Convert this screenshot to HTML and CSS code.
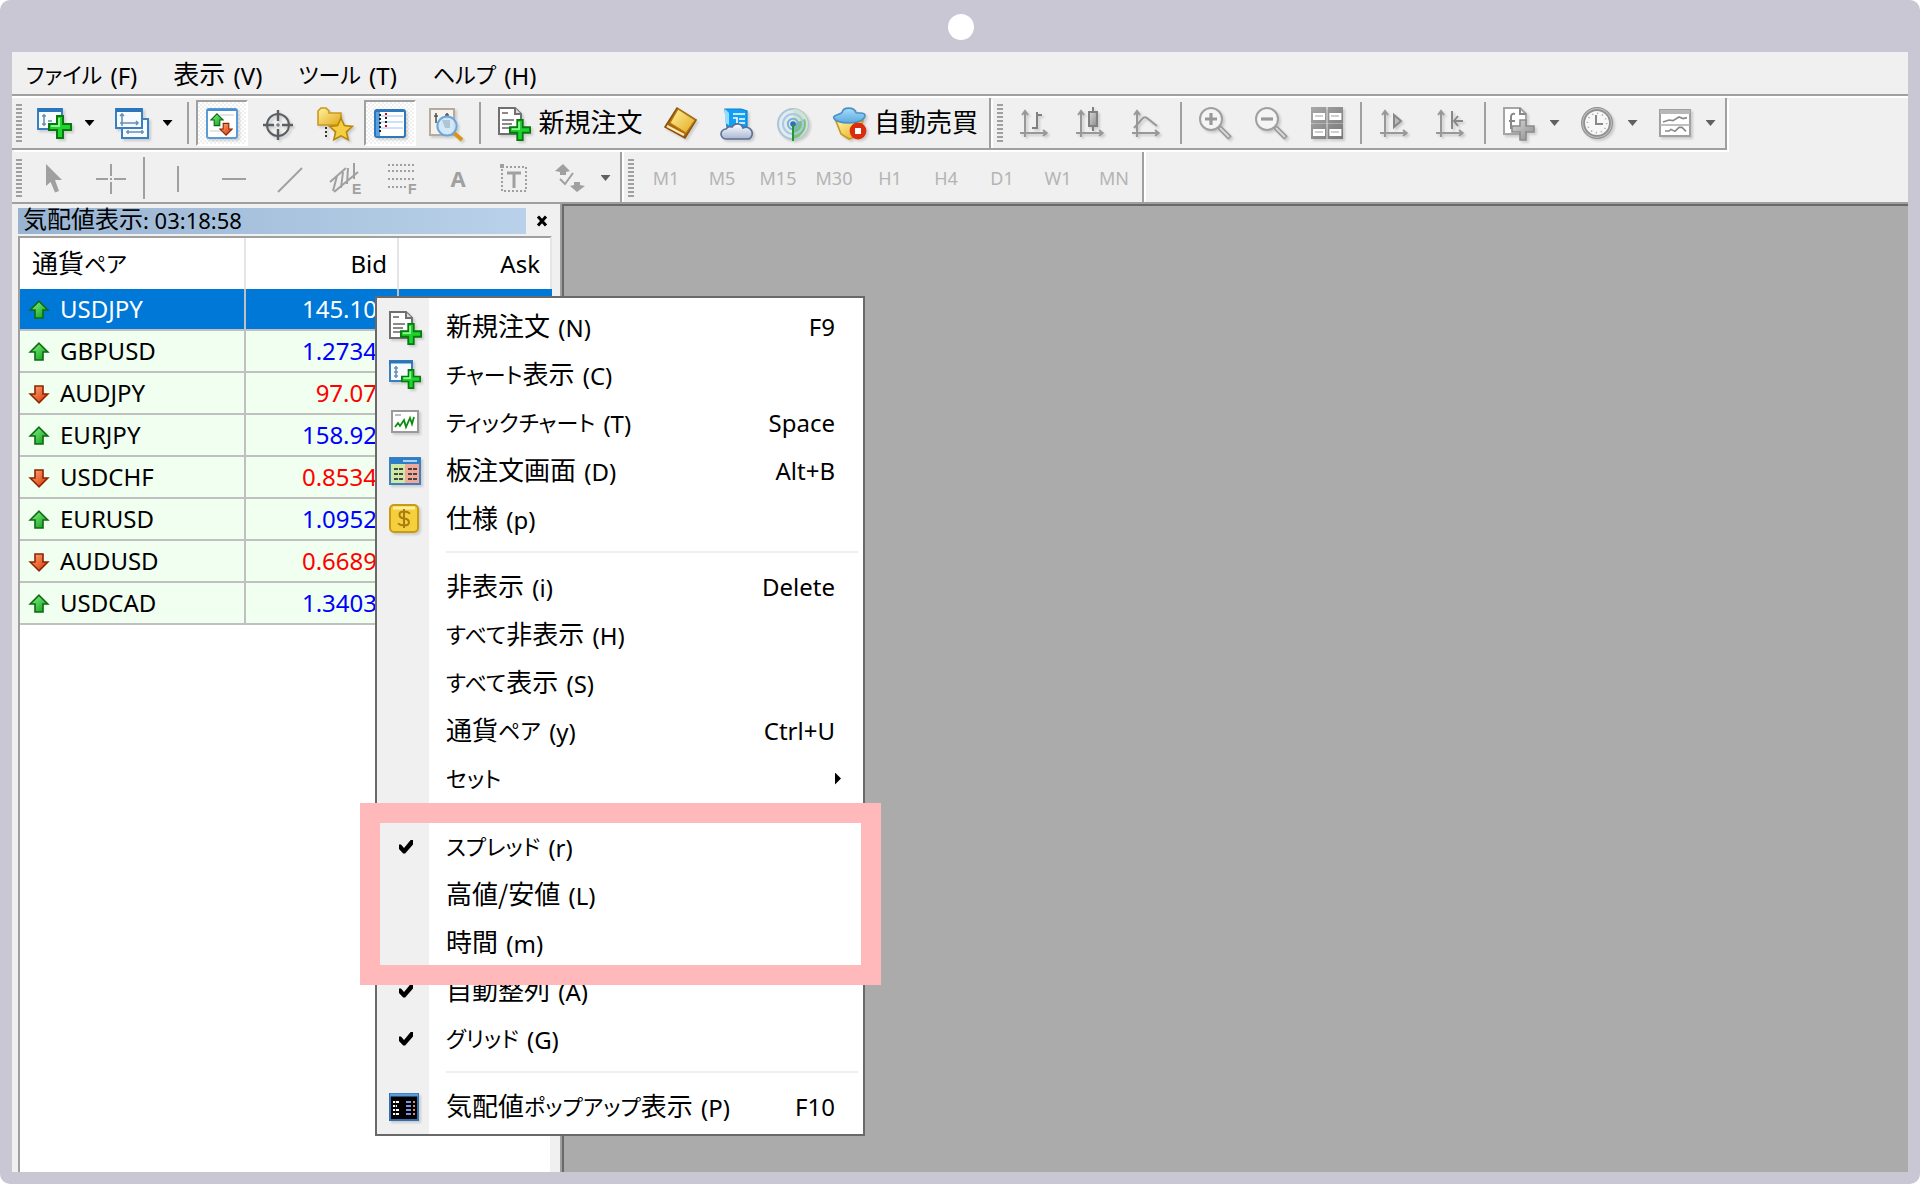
FILE: index.html
```html
<!DOCTYPE html>
<html lang="ja">
<head>
<meta charset="utf-8">
<meta name="viewport" content="width=device-width, initial-scale=1">
<title>気配値表示</title>
<link rel="stylesheet" href="styles.css">
</head>
<body>
<svg class="defs" aria-hidden="true">
  <defs>
    <linearGradient id="gGold" x1="0" y1="0" x2="1" y2="1"><stop offset="0" stop-color="#fff3a0"/><stop offset="1" stop-color="#e2a81c"/></linearGradient>
    <linearGradient id="gGreen" x1="0" y1="0" x2="1" y2="1"><stop offset="0" stop-color="#8cf58c"/><stop offset="1" stop-color="#0a9a14"/></linearGradient>
    <linearGradient id="gRed" x1="0" y1="0" x2="1" y2="1"><stop offset="0" stop-color="#ffab7a"/><stop offset="1" stop-color="#d83200"/></linearGradient>
    <linearGradient id="gSky" x1="0" y1="0" x2="0" y2="1"><stop offset="0" stop-color="#a8dcfa"/><stop offset="1" stop-color="#5aa9e0"/></linearGradient>
    <linearGradient id="gCloud" x1="0" y1="0" x2="0" y2="1"><stop offset="0" stop-color="#ffffff"/><stop offset="1" stop-color="#a9b7d2"/></linearGradient>
    <linearGradient id="gGrey" x1="0" y1="0" x2="1" y2="1"><stop offset="0" stop-color="#d8d8d8"/><stop offset="1" stop-color="#8c8c8c"/></linearGradient>
    <linearGradient id="gTile" x1="0" y1="0" x2="1" y2="1"><stop offset="0" stop-color="#a8a8a8"/><stop offset="1" stop-color="#787878"/></linearGradient>
    <symbol id="plus" viewBox="0 0 12 12"><path d="M4.500.500h3v4h4v3h-4v4h-3v-4h-4v-3h4z" fill="#1fd42e" stroke="#067a0c"/><path d="M5.500 1.500v4h-4" fill="none" stroke="#8df592"/></symbol>
    <symbol id="up" viewBox="0 0 10 10"><path d="M5 .6 9.400 5H7v4H3V5H.6z" fill="url(#gGreen)" stroke="#0b6b10" stroke-width=".8"/></symbol>
    <symbol id="down" viewBox="0 0 10 10"><path d="M5 9.400.6 5H3V1h4v4h2.400z" fill="url(#gRed)" stroke="#8c2500" stroke-width=".8"/></symbol>
    <symbol id="page-plus" viewBox="0 0 18 18"><path d="M1.500 1.500h8l3 3v10h-11z" fill="#fff" stroke="#707070"/><path d="M9.500 1.500v3h3" fill="#ddd" stroke="#707070"/><path d="M3 4h3M3 7.500h6M3 9.500h5M3 11.500h4" stroke="#8a8a8a"/><use href="#plus" x="6.500" y="7" width="11" height="11"/></symbol>
    <symbol id="chart-plus" viewBox="0 0 18 18"><rect x="1" y="2" width="12" height="10" fill="#f6fbff" stroke="#3a7fbf"/><path d="M1 2.500h12" stroke="#2b76bb" stroke-width="2"/><path d="M4 4.500v6M3 5.500h2M3 9.500h2M6 8h2" stroke="#6d8fb0" stroke-width=".8"/><use href="#plus" x="6" y="5" width="12" height="12"/></symbol>
    <symbol id="chart-plus-small" viewBox="0 0 18 18"><rect x="1.500" y="2" width="11" height="10" fill="#f6fbff" stroke="#3a7fbf"/><path d="M1 2.500h12" stroke="#2b76bb" stroke-width="1.500"/><path d="M4.500 4.500v6M3.500 5.500h2M3.500 7.500h2M3.500 9.500h2" stroke="#6d8fb0" stroke-width=".8"/><use href="#plus" x="7" y="6" width="10" height="10"/></symbol>
    <symbol id="axes" viewBox="0 0 18 18"><path d="M4 3v13M1.500 14h13M2.500 5 4 3l1.500 2M13 12.500l1.800 1.500L13 15.500" fill="none" stroke="#989898"/></symbol>
  </defs>
</svg>

<div class="frame">
  <span class="camera"></span>
  <main class="app">
    <nav class="menubar">
      <button><span class="kana">ファイル</span> (F)</button>
      <button><span class="kanji">表示</span> (V)</button>
      <button><span class="kana">ツール</span> (T)</button>
      <button><span class="kana">ヘルプ</span> (H)</button>
    </nav>

    <div class="bar-row">
      <div class="toolbar">
        <button class="tool drop" aria-label="新規チャート"><svg class="icon" viewBox="0 0 18 18"><use href="#chart-plus"/></svg><i class="caret"></i></button>
        <button class="tool drop" aria-label="プロファイル"><svg class="icon" viewBox="0 0 18 18"><g fill="#f6fbff" stroke="#3a7fbf"><rect x="4" y="7" width="13" height="9.500"/><rect x="1" y="2" width="13" height="9.500"/></g><path d="M1 2.500h13" stroke="#2b76bb" stroke-width="2"/><path d="M4 4.500v6M3 5.500l1-1 1 1M3 9h9M11 8l1 1-1 1M6 13.500h9M7 12.500v2M14 12.500v2" fill="none" stroke="#6d8fb0" stroke-width=".8"/></svg><i class="caret"></i></button>
        <i class="sep"></i>
        <button class="tool pressed" aria-label="気配値表示"><svg class="icon" viewBox="0 0 18 18"><rect x="1.500" y="2" width="15" height="14.500" rx="1" fill="#fff" stroke="#5b9bd8"/><path d="M1.500 2.500h15" stroke="#4a90d4"/><path d="M8 5h7M3 13h7" stroke="#e4e4e4"/><use href="#up" x="3" y="4" width="7" height="7"/><use href="#down" x="7.500" y="8.500" width="7" height="7"/></svg></button>
        <button class="tool" aria-label="データウィンドウ"><svg class="icon" viewBox="0 0 18 18"><g fill="none" stroke="#5a5f63"><circle cx="9" cy="10" r="5.500"/><path d="M9 2.500v5.500M9 12v5.500M1.500 10H7M11 10h5.500" stroke-width="1.200"/></g><path d="M8 10h2M9 9v2" stroke="#5a5f63" stroke-width=".5"/></svg></button>
        <button class="tool" aria-label="ナビゲーター"><svg class="icon" viewBox="0 0 18 18"><path d="M1 10V3l1.500-1.500h2.500L6.500 3v1h6v6z" fill="url(#gGold)" stroke="#c79a1c" stroke-width=".8"/><path d="M5 11v6" stroke="#333" stroke-dasharray="1 1"/><path d="m12.500 6.500 1.700 3.800 4 .4-3 2.700.9 4-3.600-2-3.600 2 .9-4-3-2.700 4-.4z" fill="#f5cf42" stroke="#b8860b" stroke-width=".8"/></svg></button>
        <button class="tool pressed" aria-label="ターミナル"><svg class="icon" viewBox="0 0 18 18"><rect x="1.500" y="2.500" width="15" height="13.500" rx="1" fill="#fff" stroke="#2f77bd"/><path d="M1.500 3h15" stroke="#2f77bd"/><path d="M3 3.500v12" stroke="#5ba0e0" stroke-width="2"/><path d="M4.500 5.500h11M4.500 8.500h11M4.500 11.500h11" stroke="#cfe0ff"/><path d="M4 4.500v10" stroke="#222" stroke-dasharray="1 1"/><path d="M6.500 4.500h1M6.500 10.500h1" stroke="#e00"/><path d="M6.500 6.500h1M6.500 8.500h1" stroke="#222"/></svg></button>
        <button class="tool" aria-label="ストラテジーテスター"><svg class="icon" viewBox="0 0 18 18"><rect x="1" y="2" width="12" height="13" fill="#f6f2ec" stroke="#b5aaa0"/><path d="M4 4v5M3 5.500h2M9.500 4v3M8.500 5h2" stroke="#555" stroke-width=".8"/><path d="m12.500 13.500 4.500 4" stroke="#d99512" stroke-width="2"/><circle cx="9.500" cy="10.500" r="4.800" fill="#cfe6f8" fill-opacity=".9" stroke="#6aa6dc"/><path d="M7 7.500h4v4H8.500z" fill="#8fa9b8" opacity=".55"/></svg></button>
        <i class="sep"></i>
        <button class="tool text order"><svg class="icon" viewBox="0 0 18 18"><use href="#page-plus"/></svg><span class="kanji">新規注文</span></button>
        <button class="tool" aria-label="メタエディター"><svg class="icon" viewBox="0 0 18 18"><path d="M1 11 7 1.500l9.500 6-5.500 9z" fill="#a8660f" stroke="#8c520c" stroke-width=".8"/><path d="m3.500 9 4-7 8.500 5.500-4.500 6.500z" fill="url(#gGold)" stroke="#b97c14" stroke-width=".6"/><path d="m2 10.500 8.500 4.500" stroke="#ffe9b0" stroke-width="1.200"/></svg></button>
        <button class="tool" aria-label="VPS"><svg class="icon" viewBox="0 0 18 18"><path d="M3 2h8l3 1v8H4z" fill="#12a0f5" stroke="#0d80d0" stroke-width=".6"/><path d="M3 2v7l2 1V4z" fill="#9adcff"/><path d="M7 4.500h6M7 6.500h2v3M10 7h3M10 9h3" stroke="#fff" stroke-width=".8" fill="none"/><path d="M3.500 17a2.500 2.500 0 0 1 0-5 2.500 2.500 0 0 1 3-1 3 3 0 0 1 5.500.5A2.800 2.800 0 0 1 15 17z" fill="url(#gCloud)" stroke="#5b6f96" stroke-width=".8"/></svg></button>
        <button class="tool" aria-label="シグナル"><svg class="icon" viewBox="0 0 18 18"><circle cx="9" cy="9.500" r="7.500" fill="#e2ebee" stroke="#a9c6d6"/><path d="M9 9.500V2A7.500 7.500 0 0 1 9 17z" fill="#cfe3cf"/><path d="M9 9.500 15 7A7.500 7.500 0 0 1 9 17z" fill="#7cc07c"/><circle cx="9" cy="9.500" r="5" fill="none" stroke="#a8c8e4"/><circle cx="9" cy="9.500" r="2.600" fill="none" stroke="#7fb0dc"/><circle cx="9" cy="9.500" r="1.400" fill="#2c6fc4"/><path d="M9 10v8" stroke="#1e9a28"/></svg></button>
        <button class="tool text auto"><svg class="icon" viewBox="0 0 18 18"><path d="M2 8h13.500l-3 7.500-4 1.500-4-2.500z" fill="url(#gGold)" stroke="#c79a1c" stroke-width=".8"/><path d="M.8 6C1.500 4.500 4 5 5 3.800 5.500.8 11 .8 12 3.800c1.500.7 4-.6 4.500 1.200 0 2.800-4 4-8 4S.8 8 .8 6z" fill="url(#gSky)" stroke="#4a90c4" stroke-width=".8"/><circle cx="13" cy="13" r="4.200" fill="#dc2c10"/><rect x="11.500" y="11.500" width="3" height="3" fill="#fff"/></svg><span class="kanji">自動売買</span></button>
      </div>
      <div class="toolbar">
        <button class="tool" aria-label="バーチャート" disabled><svg class="icon" viewBox="0 0 18 18"><use href="#axes"/><path d="M10 3.500V12M10 5h2.500M7.500 11.500H10" stroke="#808080"/></svg></button>
        <button class="tool" aria-label="ローソク足" disabled><svg class="icon" viewBox="0 0 18 18"><use href="#axes"/><path d="M10 1v12" stroke="#808080"/><rect x="8" y="3.500" width="4" height="7" fill="url(#gGrey)" stroke="#808080"/></svg></button>
        <button class="tool" aria-label="ラインチャート" disabled><svg class="icon" viewBox="0 0 18 18"><use href="#axes"/><path d="M2.500 11.500 7 6.500q1-.8 2 0l5 4" fill="none" stroke="#989898"/></svg></button>
        <i class="sep"></i>
        <button class="tool" aria-label="ズームイン" disabled><svg class="icon" viewBox="0 0 18 18"><path d="m10.500 10.500 6 6" stroke="#989898" stroke-width="2.600"/><path d="m11.500 11.500 4.500 4.500" stroke="#d6d6d6"/><circle cx="7" cy="7" r="5.500" fill="#f5f5f5" stroke="#a0a0a0"/><path d="M4 7h6M7 4v6" stroke="#999" stroke-width="1.600"/></svg></button>
        <button class="tool" aria-label="ズームアウト" disabled><svg class="icon" viewBox="0 0 18 18"><path d="m10.500 10.500 6 6" stroke="#989898" stroke-width="2.600"/><path d="m11.500 11.500 4.500 4.500" stroke="#d6d6d6"/><circle cx="7" cy="7" r="5.500" fill="#f5f5f5" stroke="#a0a0a0"/><path d="M4 7h6" stroke="#999" stroke-width="1.600"/></svg></button>
        <button class="tool" aria-label="整列" disabled><svg class="icon" viewBox="0 0 18 18"><g fill="url(#gTile)"><path d="M1 1h7.700v8H1zM9.300 1H17v8H9.300zM1 9.300h7.700V17H1zM9.300 9.300H17V17H9.300z"/></g><path d="M2 4h6v3.500H2zM10.200 4h6v3.500h-6zM2 12h6v3.500H2zM10.200 12h6v3.500h-6z" fill="#fff"/><path d="M3 5.500h4M11 5.500h4M3 13.500h4M11 13.500h4" stroke="#c0c0c0" stroke-width=".8"/></svg></button>
        <i class="sep"></i>
        <button class="tool" aria-label="自動スクロール" disabled><svg class="icon" viewBox="0 0 18 18"><use href="#axes"/><path d="M8.500 5v6L12 8z" fill="#bbb" stroke="#888"/></svg></button>
        <button class="tool" aria-label="チャートシフト" disabled><svg class="icon" viewBox="0 0 18 18"><use href="#axes"/><path d="M9.500 3v9M15 8h-4.500M12.500 5.500 10.500 8l2 2.500" fill="none" stroke="#888"/></svg></button>
        <i class="sep"></i>
        <button class="tool drop" aria-label="インディケータ" disabled><svg class="icon" viewBox="0 0 18 18"><path d="M1.500 1.500h8l3 3v10h-11z" fill="#fff" stroke="#a5a5a5"/><path d="M9.500 1.500v3h3M7 4.500q-2-.5-2 1.500v6M4 8h3" fill="none" stroke="#888"/><path d="M9.500 7.500h3v3h4v3h-4v4h-3v-4h-4v-3h4z" fill="url(#gGrey)" stroke="#8c8c8c" stroke-width=".8"/></svg><i class="caret"></i></button>
        <button class="tool drop" aria-label="時間足設定" disabled><svg class="icon" viewBox="0 0 18 18"><circle cx="9" cy="9" r="7" fill="#f7f7f7" stroke="#8f8f8f" stroke-width="2"/><circle cx="9" cy="9" r="7.200" fill="none" stroke="#bcbcbc" stroke-width=".6"/><circle cx="9" cy="9" r="4.800" fill="none" stroke="#aaa" stroke-width=".8" stroke-dasharray=".6 1.900"/><path d="M8.500 5v4.500H12" fill="none" stroke="#888"/></svg><i class="caret"></i></button>
        <button class="tool drop" aria-label="定型チャート" disabled><svg class="icon" viewBox="0 0 18 18"><rect x="1.500" y="2.500" width="15" height="13" fill="#fff" stroke="#a0a0a0"/><path d="M1.500 3.500h15" stroke="#b8b8b8" stroke-width="2"/><path d="M1.500 10h15" stroke="#b0b0b0" stroke-width=".8"/><path d="m3 8.500 3-1 2 .3L11 6l2 .8 2-.5M4 13h2l1-.8 2 1 2-2 1.500 0 2 2" fill="none" stroke="#888" stroke-width=".8"/></svg><i class="caret"></i></button>
      </div>
    </div>

    <div class="bar-row second">
      <div class="toolbar drawing">
        <button class="tool" aria-label="カーソル" disabled><svg class="icon" viewBox="0 0 18 18"><path d="m5 2 8 8H9.500l2 5.500-2 .8-2.200-5.300L5 13z" fill="#a0a0a0"/></svg></button>
        <button class="tool" aria-label="十字カーソル" disabled><svg class="icon" viewBox="0 0 18 18"><path d="M9.500 2v6M9.500 11v6M2 9.500h6M11 9.500h6M9 9.500h1" stroke="#a0a0a0"/></svg></button>
        <i class="sep"></i>
        <button class="tool" aria-label="垂直線" disabled><svg class="icon" viewBox="0 0 18 18"><path d="M9 3v13" stroke="#a0a0a0"/></svg></button>
        <button class="tool" aria-label="水平線" disabled><svg class="icon" viewBox="0 0 18 18"><path d="M3 9.500h12" stroke="#a0a0a0"/></svg></button>
        <button class="tool" aria-label="トレンドライン" disabled><svg class="icon" viewBox="0 0 18 18"><path d="M3 16 15 4" stroke="#a0a0a0"/></svg></button>
        <button class="tool" aria-label="等距離チャネル" disabled><svg class="icon" viewBox="0 0 18 18"><path d="m1 11 8-7M3 16 15 6M4.500 8l-2 7.500M7.500 6l-1 8M10 4l-.5 8M13 1.500v8" stroke="#a0a0a0" fill="none"/><text x="12" y="17" class="glyph">E</text></svg></button>
        <button class="tool" aria-label="フィボナッチ" disabled><svg class="icon" viewBox="0 0 18 18"><path d="M2 2.500h14M2 5.500h14M2 9.500h14M2 13.500h9" stroke="#a0a0a0" stroke-dasharray="1 1"/><text x="12" y="17" class="glyph">F</text></svg></button>
        <button class="tool letter" aria-label="テキスト" disabled>A</button>
        <button class="tool" aria-label="テキストラベル" disabled><svg class="icon" viewBox="0 0 18 18"><rect x="3" y="3.500" width="12" height="12" fill="none" stroke="#a0a0a0" stroke-dasharray="1 1"/><path d="M2 3h2" stroke="#a0a0a0" stroke-width="2"/><path d="M5.500 6.500h7M9 6.500V14" stroke="#a0a0a0" stroke-width="1.500"/></svg></button>
        <button class="tool drop" aria-label="矢印" disabled><svg class="icon" viewBox="0 0 18 18"><path d="m5.500 2 3.500 3.500-2 .5v1.500H4V6l-2.500-.5zM12.500 16 9 13l2-.5V11h3v1.500l2.500.5z" fill="#a0a0a0"/><path d="m4 9.500 2.500 2.500 4-5.500" fill="none" stroke="#a0a0a0"/></svg><i class="caret"></i></button>
      </div>
      <div class="toolbar periods">
        <button class="tool" disabled>M1</button><button class="tool" disabled>M5</button><button class="tool" disabled>M15</button><button class="tool" disabled>M30</button><button class="tool" disabled>H1</button><button class="tool" disabled>H4</button><button class="tool" disabled>D1</button><button class="tool" disabled>W1</button><button class="tool" disabled>MN</button>
      </div>
    </div>

    <div class="work">
      <section class="watch">
        <header class="watch-head">
          <h1><span class="kanji">気配値表示</span>: 03:18:58</h1>
          <button class="close" aria-label="閉じる"><svg viewBox="0 0 12 12"><path d="m2 1.500 8 9M10 1.500l-8 9" stroke="#000" stroke-width="3"/></svg></button>
        </header>
        <div class="list">
          <table class="quotes">
            <thead><tr><th class="pair"><span class="kanji">通貨</span><span class="kana">ペア</span></th><th class="bid">Bid</th><th class="ask">Ask</th></tr></thead>
            <tbody>
              <tr class="selected"><td><svg class="dir"><use href="#up"/></svg>USDJPY</td><td>145.10</td><td></td></tr>
              <tr class="rise"><td><svg class="dir"><use href="#up"/></svg>GBPUSD</td><td>1.2734</td><td></td></tr>
              <tr class="fall"><td><svg class="dir"><use href="#down"/></svg>AUDJPY</td><td>97.07</td><td></td></tr>
              <tr class="rise"><td><svg class="dir"><use href="#up"/></svg>EURJPY</td><td>158.92</td><td></td></tr>
              <tr class="fall"><td><svg class="dir"><use href="#down"/></svg>USDCHF</td><td>0.8534</td><td></td></tr>
              <tr class="rise"><td><svg class="dir"><use href="#up"/></svg>EURUSD</td><td>1.0952</td><td></td></tr>
              <tr class="fall"><td><svg class="dir"><use href="#down"/></svg>AUDUSD</td><td>0.6689</td><td></td></tr>
              <tr class="rise"><td><svg class="dir"><use href="#up"/></svg>USDCAD</td><td>1.3403</td><td></td></tr>
            </tbody>
          </table>
        </div>
      </section>
      <section class="canvas"></section>

      <div class="context">
        <button class="item"><svg class="icon" viewBox="0 0 18 18"><use href="#page-plus"/></svg><span><span class="kanji">新規注文</span> (N)</span><kbd>F9</kbd></button>
        <button class="item"><svg class="icon" viewBox="0 0 18 18"><use href="#chart-plus-small"/></svg><span><span class="kana">チャート</span><span class="kanji">表示</span> (C)</span></button>
        <button class="item"><svg class="icon" viewBox="0 0 18 18"><rect x="2.500" y="3" width="13" height="10.500" fill="#fff" stroke="#9a9a9a"/><path d="M4 5h3" stroke="#aaa" stroke-width=".8"/><path d="m4 11 1.500-2 1 1.500 2-3 1 3.500 2-4.500 1 3 1-3.500" fill="none" stroke="#0c8a12" stroke-width=".9"/></svg><span><span class="kana">ティックチャート</span> (T)</span><kbd>Space</kbd></button>
        <button class="item"><svg class="icon" viewBox="0 0 18 18"><rect x="1.500" y="2.500" width="15" height="13" fill="#cdeaa2" stroke="#3f7fbf"/><path d="M9 5h7v10H9z" fill="#f2a899"/><path d="M1.500 4h15" stroke="#2f7fc8" stroke-width="3"/><path d="M8 4h7" stroke="#a8d4f4"/><path d="M3.500 8h4.500M10.500 8H15M3.500 10.500h4.500M10.500 10.500H15M3.500 13h4.500M10.500 13H15" stroke="#444" stroke-width=".9" stroke-dasharray="2 .5"/></svg><span><span class="kanji">板注文画面</span> (D)</span><kbd>Alt+B</kbd></button>
        <button class="item"><svg class="icon" viewBox="0 0 18 18"><rect x="1.500" y="2" width="14" height="13.500" rx="2" fill="#f5cf3c" stroke="#c99a14"/><path d="M3 3.500h11" stroke="#ffeea0" stroke-width="1.500"/><path d="M11.500 6.300q-1-1-3-1c-3 0-3 3 0 3.400 3.300.4 3.300 3.500 0 3.500q-2 0-3-1M8.500 4v9.500" fill="none" stroke="#a87c10"/></svg><span><span class="kanji">仕様</span> (p)</span></button>
        <hr>
        <button class="item"><i></i><span><span class="kanji">非表示</span> (i)</span><kbd>Delete</kbd></button>
        <button class="item"><i></i><span><span class="kana">すべて</span><span class="kanji">非表示</span> (H)</span></button>
        <button class="item"><i></i><span><span class="kana">すべて</span><span class="kanji">表示</span> (S)</span></button>
        <button class="item"><i></i><span><span class="kanji">通貨</span><span class="kana">ペア</span> (y)</span><kbd>Ctrl+U</kbd></button>
        <button class="item submenu"><i></i><span><span class="kana">セット</span></span></button>
        <hr>
        <div class="marked">
          <label class="item"><input type="checkbox" checked><span><span class="kana">スプレッド</span> (r)</span></label>
          <label class="item"><input type="checkbox"><span><span class="kanji">高値/安値</span> (L)</span></label>
          <label class="item"><input type="checkbox"><span><span class="kanji">時間</span> (m)</span></label>
        </div>
        <label class="item"><input type="checkbox" checked><span><span class="kanji">自動整列</span> (A)</span></label>
        <label class="item"><input type="checkbox" checked><span><span class="kana">グリッド</span> (G)</span></label>
        <hr>
        <button class="item"><svg class="icon" viewBox="0 0 18 18"><rect x="1.500" y="2.500" width="14" height="13" fill="#000" stroke="#2f6fb0"/><path d="M1.500 3h14" stroke="#5a9bd8" stroke-width="1.500"/><path d="M3 6.500h3M3 8.500h2M3 10.500h3M3 12.500h3" stroke="#fff" stroke-dasharray="1 .4 2 0"/><path d="M9.500 6.500H12M9.500 8.500H12M9.500 10.500H12M9.500 12.500H12" stroke="#7d95e8"/><path d="M13 6.500h1M13 8.500h1M13 10.500h1M13 12.500h1" stroke="#e88070"/></svg><span><span class="kanji">気配値</span><span class="kana">ポップアップ</span><span class="kanji">表示</span> (P)</span><kbd>F10</kbd></button>
      </div>
    </div>
  </main>
</div>
</body>
</html>
```
FILE: styles.css
```css
* { box-sizing: border-box; }

body {
  margin: 0;
  background: #fff;
  color: #000;
  font-family: "Noto Sans", "Noto Sans CJK JP", sans-serif;
  font-size: 24px;
}

button {
  margin: 0;
  padding: 0;
  border: 0;
  background: none;
  color: inherit;
  font: inherit;
  text-align: left;
}

.defs { position: absolute; width: 0; height: 0; }

.kanji, .kana {
  font-family: "Noto Sans CJK JP", sans-serif;
  font-feature-settings: "palt";
}
.kanji { font-size: 26px; vertical-align: 1px; }
.kana { font-size: 22px; vertical-align: 2px; }

.frame {
  position: relative;
  display: flex;
  min-height: 100vh;
  padding: 52px 12px 12px;
  border-radius: 10px;
  background: #c8c7d3;
}

.camera {
  position: absolute;
  top: 14px;
  left: 50%;
  width: 26px;
  height: 26px;
  margin-left: -12px;
  border-radius: 50%;
  background: #fff;
}

.app {
  display: flex;
  flex: 1;
  flex-direction: column;
  min-width: 0;
  background: #f0f0f0;
}

/* Menu bar */
.menubar {
  display: flex;
  gap: 36px;
  height: 44px;
  padding: 0 14px;
  border-bottom: 2px solid #a0a0a0;
  box-shadow: 0 2px #fff;
  white-space: nowrap;
}
.menubar button { line-height: 42px; }
.menubar span,
.item > span > span:last-child { margin-right: 2px; }

/* Toolbars */
.bar-row { display: flex; height: 54px; }
.toolbar {
  display: flex;
  align-items: center;
  height: 52px;
  margin-top: 2px;
  padding-left: 12px;
  border-right: 2px solid #a0a0a0;
  border-bottom: 2px solid #a0a0a0;
  box-shadow: 2px 2px #fff;
}
.toolbar + .toolbar { padding-left: 16px; }
.toolbar::before {
  content: "";
  width: 6px;
  height: 38px;
  margin-left: -8px;
  background: repeating-linear-gradient(#a0a0a0 0 2px, transparent 2px 4px);
}
.toolbar + .toolbar::before { margin-right: 4px; margin-left: -10px; }
.toolbar:first-child::before { margin-right: 4px; }
.second .toolbar { border-bottom: 0; box-shadow: 2px 0 #fff; }
.second { height: 52px; }

.tool {
  display: flex;
  flex: none;
  align-items: center;
  justify-content: center;
  width: 56px;
  height: 46px;
}
.tool.drop { width: 78px; gap: 13px; }
.tool.text { gap: 6px; }
.tool.text .kanji { padding-bottom: 4px; line-height: 38px; }
.tool.order { width: 167px; }
.tool.auto { width: 168px; }
.tool.pressed {
  width: 52px;
  margin: 0 2px;
  border: 2px solid;
  border-color: #a0a0a0 #fff #fff #a0a0a0;
  background: repeating-conic-gradient(#fff 0 25%, #f0f0f0 0 50%) 0 0 / 4px 4px;
}
.icon {
  flex: none;
  width: 36px;
  height: 36px;
  overflow: visible;
  filter: drop-shadow(2px 2px 1px rgba(0, 0, 0, .15));
}
.drawing .icon { filter: none; }
.caret {
  width: 10px;
  height: 6px;
  background: #000;
  clip-path: polygon(0 0, 100% 0, 50% 100%);
}
:disabled .caret { background: #606060; }
.sep {
  width: 2px;
  height: 42px;
  margin: 0 5px;
  background: #a0a0a0;
}
.glyph { fill: #a0a0a0; font: bold 7px "Liberation Sans", sans-serif; }
.letter { color: #a0a0a0; font: bold 22px "Noto Sans", sans-serif; }
.periods .tool { color: #b4b4b4; font-size: 18px; }

/* Workspace */
.work {
  position: relative;
  display: flex;
  flex: 1;
  min-height: 960px;
  border-top: 2px solid #a0a0a0;
}
.watch {
  display: flex;
  flex: none;
  flex-direction: column;
  width: 550px;
  padding: 4px 8px 0 6px;
  border-right: 2px solid #a0a0a0;
}
.watch-head {
  display: flex;
  align-items: center;
  height: 26px;
  margin-bottom: 2px;
}
.watch-head h1 {
  width: 508px;
  height: 26px;
  margin: 0;
  padding-left: 5px;
  background: linear-gradient(90deg, #99b4d1, #b9d1ea);
  font-size: 22px;
  font-weight: 400;
  line-height: 24px;
}
.watch-head .kanji { font-size: 24px; line-height: 20px; }
.close { width: 12px; height: 12px; margin-left: 10px; }
.close svg { display: block; width: 12px; height: 12px; }
.list {
  flex: 1;
  border-top: 2px solid #a0a0a0;
  border-left: 2px solid #a0a0a0;
  border-right: 2px solid #f0f0f0;
  background: #fff;
}

.quotes {
  width: 532px;
  table-layout: fixed;
  border-spacing: 0;
  white-space: nowrap;
}
.quotes th {
  height: 50px;
  padding: 0 10px;
  border-right: 2px solid #e5e5e5;
  font-weight: 400;
  line-height: 48px;
  text-align: right;
}
.quotes .pair { width: 226px; padding-left: 12px; text-align: left; }
.quotes .bid { width: 153px; }
.quotes td {
  height: 42px;
  padding: 0 20px 0 0;
  border-right: 2px solid #c0c0c0;
  border-bottom: 2px solid #c0c0c0;
  background: #f0fff0;
  line-height: 40px;
  text-align: right;
}
.quotes td:first-child { padding-left: 8px; text-align: left; }
.quotes td:last-child { border-right: 0; }
.quotes .selected td { background: #0078d7; color: #fff; }
.rise td + td { color: #00f; }
.fall td + td { color: #f00; }
.dir { width: 22px; height: 20px; margin-right: 10px; vertical-align: -2px; }

.canvas {
  flex: 1;
  border-top: 2px solid #696969;
  border-left: 2px solid #696969;
  background: #ababab;
}

/* Context menu, open over the list and the canvas */
.context {
  position: absolute;
  top: 92px;
  left: 363px;
  width: 490px;
  padding: 4px 2px 4px 3px;
  border: 2px solid #696969;
  background: linear-gradient(90deg, #f0f0f0 52px, #fff 52px);
}
.item {
  display: grid;
  grid-template-columns: 66px 1fr auto;
  align-items: center;
  width: 100%;
  height: 48px;
  padding-right: 26px;
  line-height: 46px;
  white-space: nowrap;
}
.item .icon { margin-left: 7px; }
.item kbd { font: inherit; }
.item input {
  width: 14px;
  height: 14px;
  margin: 0 0 0 19px;
  appearance: none;
}
.item input:checked {
  background: #000;
  clip-path: polygon(0 36%, 14% 36%, 36% 60%, 86% 0, 100% 0, 100% 36%, 44% 100%, 30% 100%, 0 68%);
}
.submenu::after {
  content: "";
  width: 6px;
  height: 12px;
  margin-right: -9px;
  background: #000;
  clip-path: polygon(0 0, 100% 50%, 0 100%);
}
.context hr {
  height: 2px;
  margin: 9px 3px 9px 66px;
  border: 0;
  background: #f0f0f0;
}
.marked { position: relative; }
.marked::after {
  content: "";
  position: absolute;
  inset: -19px -20px;
  z-index: 1;
  border: 20px solid #ffb9bb;
  pointer-events: none;
}
```
